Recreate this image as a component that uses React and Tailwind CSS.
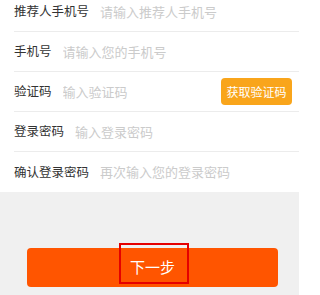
import React from 'react';

const rows = [
  { label: '推荐人手机号', placeholder: '请输入推荐人手机号' },
  { label: '手机号', placeholder: '请输入您的手机号' },
  { label: '验证码', placeholder: '输入验证码', code: true },
  { label: '登录密码', placeholder: '输入登录密码' },
  { label: '确认登录密码', placeholder: '再次输入您的登录密码' },
];

export default function App() {
  return (
    <div
      className="h-[295px] w-[299px] overflow-hidden bg-[#f0f0f0]"
      style={{ fontFamily: '"Noto Sans CJK SC", "Noto Sans", sans-serif' }}
    >
      <div className="-mt-2 bg-white">
        {rows.map((row, i) => (
          <div
            key={row.label}
            className={
              'ml-[14px] flex h-10 items-center pr-[7px] ' +
              (i < rows.length - 1 ? 'border-b border-[#ececec]' : '')
            }
          >
            <span className="text-[12.5px] text-[#333]">{row.label}</span>
            <input
              readOnly
              placeholder={row.placeholder}
              className="ml-[11px] min-w-0 flex-1 bg-transparent text-[13px] text-[#333] outline-none placeholder:text-[#cbcbcb]"
            />
            {row.code && (
              <button className="h-[27px] w-[71px] rounded-[4px] bg-[#f9a51b] text-[12px] text-white">
                获取验证码
              </button>
            )}
          </div>
        ))}
      </div>

      <div className="relative mt-[56px] ml-[27px] mr-[21px]">
        <button className="flex h-[39px] w-full items-center justify-center rounded-[4px] bg-[#ff5500] text-[15px] text-white">
          下一步
        </button>
        <div className="pointer-events-none absolute left-[92px] top-[-5px] h-[41px] w-[70px] border-2 border-[#e50000]" />
      </div>
    </div>
  );
}
